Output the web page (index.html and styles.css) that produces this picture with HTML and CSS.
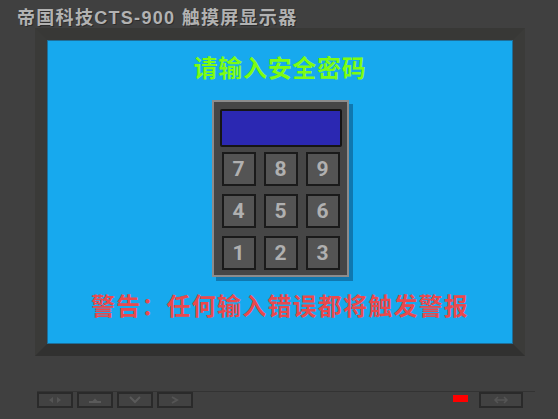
FILE: index.html
```html
<!DOCTYPE html>
<html lang="zh-CN">
    <head>
        <meta charset="UTF-8" />
        <meta name="viewport" content="width=device-width, initial-scale=1.0" />
        <title>触摸屏显示器</title>
        <link rel="stylesheet" href="styles.css">
    </head>
    <body>
        <div class="device">
            <div class="brand">帝国科技CTS-900 触摸屏显示器</div>
            <div class="frame">
                <div class="screen">
                    <div class="prompt">请输入安全密码</div>
                    <div class="pad">
                        <div class="pad-display"></div>
                        <div class="pad-keys">
                            <div class="key">7</div>
                            <div class="key">8</div>
                            <div class="key">9</div>
                            <div class="key">4</div>
                            <div class="key">5</div>
                            <div class="key">6</div>
                            <div class="key">1</div>
                            <div class="key">2</div>
                            <div class="key">3</div>
                        </div>
                    </div>
                    <div class="warning">警告：任何输入错误都将触发警报</div>
                </div>
            </div>
            <div class="toolbar">
                <div class="btn">
                    <svg width="14" height="8" viewBox="0 0 14 8"><path d="M1 4 L5 1 V7 Z M13 4 L9 1 V7 Z" fill="#555"/></svg>
                </div>
                <div class="btn">
                    <svg width="14" height="8" viewBox="0 0 14 8"><path d="M1 6 H13 M5 6 L7 4 L9 6" stroke="#5a5a5a" stroke-width="2" fill="none"/></svg>
                </div>
                <div class="btn">
                    <svg width="14" height="8" viewBox="0 0 14 8"><path d="M2 1 L7 6 L12 1" stroke="#5a5a5a" stroke-width="2" fill="none"/></svg>
                </div>
                <div class="btn">
                    <svg width="14" height="8" viewBox="0 0 14 8"><path d="M4 1 L9 4 L4 7" stroke="#555" stroke-width="2" fill="none"/></svg>
                </div>
                <div class="spacer"></div>
                <div class="led"></div>
                <div class="btn btn-wide">
                    <svg width="16" height="8" viewBox="0 0 16 8"><path d="M3 4 H13 M5 1 L2 4 L5 7 M11 1 L14 4 L11 7" stroke="#555" stroke-width="1.5" fill="none"/></svg>
                </div>
            </div>
        </div>
    </body>
</html>
```

FILE: styles.css
```css
* {
    margin: 0;
    padding: 0;
    box-sizing: border-box;
}
body {
    background-color: #404040;
    font-family: "Liberation Sans", "Noto Sans CJK SC", sans-serif;
}
.device {
    width: 558px;
    height: 419px;
    overflow: hidden;
}
.brand {
    height: 28px;
    padding: 8px 0 0 17px;
    font-size: 18px;
    line-height: 20px;
    font-weight: bold;
    letter-spacing: 1.3px;
    color: #b2b2b2;
    text-shadow: 1px 1px 0 #2c2c2c;
}

.frame {
    width: 490px;
    margin-left: 35px;
    border: 12px solid;
    border-color: #383836 #3b3b39 #313130 #3a3a38;
}
.screen {
    height: 304px;
    background-color: #17a9ee;
    border: 1px solid #1e6f9a;
    display: flex;
    flex-direction: column;
    align-items: center;
    padding-top: 11px;
}
.prompt {
    font-family: "Noto Sans CJK SC", sans-serif;
    font-size: 24px;
    line-height: 30px;
    font-weight: bold;
    letter-spacing: 0.7px;
    color: #7dfc12;
}

.pad {
    width: 137px;
    margin-top: 18px;
    padding: 7px 5px 5px 6px;
    background-color: #464646;
    border: 2px solid #8c8c8c;
    box-shadow: 4px 4px 0 rgba(0, 30, 60, 0.35);
}
.pad-display {
    height: 38px;
    background-color: #2b28b2;
    border: 2px solid #151515;
    border-radius: 2px;
}
.pad-keys {
    display: grid;
    grid-template-columns: repeat(3, 34px);
    gap: 8px;
    margin: 5px 0 0 2px;
}
.key {
    height: 34px;
    background-color: #545454;
    border: 2px solid #1a1a1a;
    color: #b0b0b0;
    font-family: "Roboto", "Liberation Sans", sans-serif;
    font-weight: bold;
    font-size: 21px;
    line-height: 30px;
    text-align: center;
}

.warning {
    margin-top: 13px;
    font-family: "Noto Sans CJK SC", sans-serif;
    font-size: 24px;
    line-height: 30px;
    font-weight: bold;
    letter-spacing: 1.2px;
    color: #e9494d;
}

.toolbar {
    display: flex;
    align-items: flex-start;
    width: 498px;
    margin: 35px 0 0 37px;
    border-top: 1px solid #333;
}
.btn {
    width: 36px;
    height: 16px;
    margin-right: 4px;
    border: 2px solid #2a2a2a;
    background-color: #424242;
    display: flex;
    align-items: center;
    justify-content: center;
}
.btn-wide {
    width: 44px;
    margin-right: 12px;
}
.spacer {
    flex: 1;
}
.led {
    width: 15px;
    height: 7px;
    margin: 3px 11px 0 0;
    background-color: #ff0000;
}
```
